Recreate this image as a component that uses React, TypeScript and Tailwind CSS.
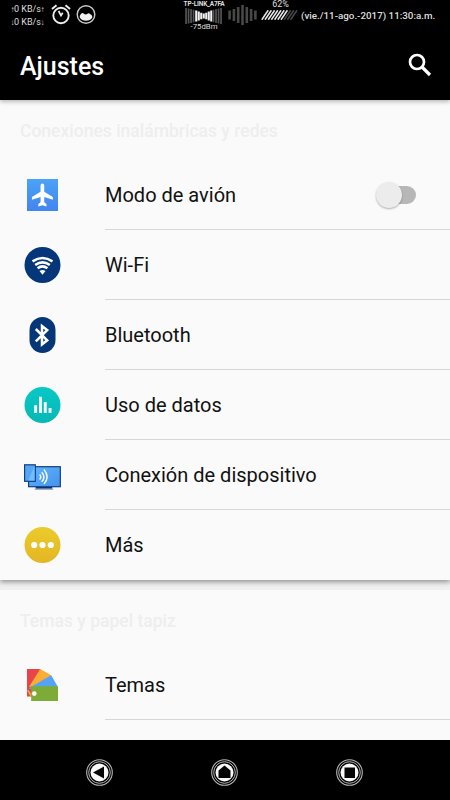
import type { ReactNode } from 'react';

type RowProps = {
    icon: ReactNode;
    label: string;
    action?: ReactNode;
    showDivider?: boolean;
};

const WIFI_BARS = [
    { x: 0.2, h: 16, on: false },
    { x: 2.7, h: 15, on: false },
    { x: 5.2, h: 14, on: false },
    { x: 7.7, h: 12.5, on: false },
    { x: 10.2, h: 11, on: true },
    { x: 12.7, h: 9, on: true },
    { x: 15.2, h: 6.5, on: true },
    { x: 17.7, h: 5, on: true },
    { x: 20.2, h: 6.5, on: true },
    { x: 22.7, h: 9, on: true },
    { x: 25.2, h: 11, on: true },
    { x: 27.7, h: 12.5, on: false },
    { x: 30.2, h: 14, on: false },
    { x: 32.7, h: 15, on: false },
    { x: 35.2, h: 16, on: false },
];

const CELL_BARS = [9, 12, 16, 20, 16, 12, 9];

const ArrowMark = ({ children }: { children: ReactNode }) => (
    <span className="inline-flex w-[3px] justify-center font-['Liberation_Sans',sans-serif] text-[8px]">
        {children}
    </span>
);

const AlarmIcon = () => (
    <svg width="20" height="21" viewBox="0 0 20 21" fill="none">
        <circle cx="10" cy="11.5" r="7.7" stroke="#ededed" strokeWidth="1.9" />
        <path d="M1 5 5.5 1.3M19 5l-4.5-3.7" stroke="#ededed" strokeWidth="2" />
        <path d="M7.6 7 10 11.5l1.7-2.7" stroke="#ededed" strokeWidth="1.7" />
    </svg>
);

const LevelIcon = () => (
    <svg width="20" height="21" viewBox="0 0 20 21" fill="none">
        <circle cx="10" cy="10.5" r="8.8" stroke="#c9c9c9" strokeWidth="1.4" />
        <path
            d="M3.8 13.500q-.6-2 1-3.200Q6.500 8 8.200 10q1.800 1 3.300-.3 1.500-1.200 2.700.5 2.400.6 2 3.500-2 3-6.200 3T3.800 13.500Z"
            fill="#f2f2f2"
        />
    </svg>
);

const StatusBar = () => (
    <div className="flex h-[30px] items-start text-[#dedede]">
        <div className="ml-[11px] flex w-[34px] flex-col pt-[3px] text-[9px] leading-[13px] whitespace-nowrap">
            <p>
                <ArrowMark>↑</ArrowMark>0 KB/s<ArrowMark>↑</ArrowMark>
            </p>
            <p>
                <ArrowMark>↓</ArrowMark>0 KB/s<ArrowMark>↓</ArrowMark>
            </p>
        </div>
        <div className="ml-[6px] flex gap-[5px] pt-[4px]">
            <AlarmIcon />
            <LevelIcon />
        </div>
        <div className="ml-[87px] flex w-[42px] flex-col items-center whitespace-nowrap">
            <p className="h-[8px] text-[6.5px] leading-[8px] font-bold tracking-[-0.2px]">
                TP-LINK_A7FA
            </p>
            <svg width="38" height="16" viewBox="0 0 38 16">
                {WIFI_BARS.map((bar) => (
                    <rect
                        key={bar.x}
                        x={bar.x}
                        y={8 - bar.h / 2}
                        width={bar.on ? 2.1 : 1.7}
                        height={bar.h}
                        fill={bar.on ? '#f2f2f2' : '#545454'}
                    />
                ))}
            </svg>
            <p className="-mt-px text-[7.8px] leading-[8px]">-75dBm</p>
        </div>
        <svg className="mt-[5px] ml-[3px]" width="30" height="20" viewBox="0 0 30 20">
            {CELL_BARS.map((h, i) => (
                <rect
                    key={i}
                    x={0.3 + i * 4.3}
                    y={10 - h / 2}
                    width="2.6"
                    height={h}
                    fill="#484848"
                />
            ))}
        </svg>
        <div className="ml-[2px] flex w-[38px] flex-col items-center">
            <p className="h-[10px] pl-[3px] text-[9px] leading-[8px]">62%</p>
            <svg width="37" height="10" viewBox="0 0 37 10">
                {Array.from({ length: 10 }, (_, i) => (
                    <path
                        key={i}
                        d={`M${0.8 + i * 3.2} 9.7 L${7.2 + i * 3.2} 0.3`}
                        stroke={i < 7 ? '#e8e8e8' : '#4a4a4a'}
                        strokeWidth="1.6"
                    />
                ))}
            </svg>
        </div>
        <p className="ml-[3px] pt-[9px] text-[9.8px] leading-[13px] font-medium whitespace-nowrap">
            (vie./11-ago.-2017) 11:30:a.m.
        </p>
    </div>
);

const AirplaneIcon = () => (
    <svg width="31" height="32" viewBox="0 0 32 32" preserveAspectRatio="none">
        <defs>
            <linearGradient id="plane" x2="0" y2="1">
                <stop stopColor="#4ba3f7" />
                <stop offset="1" stopColor="#4284f0" />
            </linearGradient>
        </defs>
        <path fill="url(#plane)" d="M0 0h32v32H0z" />
        <path
            d="M14 6.3a1.9 1.9 0 0 1 3.8 0v6.500l8.900 5.200v2.700l-8.900-2.800v5.300l2.300 1.900v2.300l-4.200-1.100-4.200 1.100v-2.300l2.300-1.900v-5.300l-8.900 2.800V18l8.900-5.200Z"
            fill="#fff"
        />
    </svg>
);

const WifiIcon = () => (
    <svg width="37" height="36" viewBox="0 0 36 36" fill="none">
        <circle cx="18" cy="18" r="18" fill="#06367a" />
        <g stroke="#fff" strokeWidth="2.6">
            <path d="M8 14.3Q18 7.7 28 14.3" />
            <path d="M10.700 18Q18 12.700 25.300 18" />
            <path d="M13.1 21.3Q18 17.5 22.9 21.3" />
        </g>
        <path d="M15 24q3-2.2 6 0L18 27.7Z" fill="#fff" />
    </svg>
);

const BluetoothIcon = () => (
    <svg width="27" height="36" viewBox="0 0 26 36" fill="none">
        <rect width="26" height="36" rx="13" fill="#053778" />
        <path
            d="m6.3 12 11.4 11.3-5.2 4.2V9l5.2 4.1L6.3 24.4"
            stroke="#fff"
            strokeWidth="2.5"
        />
    </svg>
);

const DataIcon = () => (
    <svg width="37" height="36" viewBox="0 0 36 36">
        <defs>
            <linearGradient id="data" x2="0" y2="1">
                <stop stopColor="#07c9c6" />
                <stop offset="1" stopColor="#07b8b4" />
            </linearGradient>
        </defs>
        <circle cx="18" cy="18" r="18" fill="url(#data)" />
        <path
            d="M9.7 18.3h2.9V26H9.7zM14.5 9.7h2.9V26h-2.9zM19.3 15.1h2.9V26h-2.9zM24.1 21.1H27V26h-2.9z"
            fill="#f7ffff"
        />
    </svg>
);

const CastIcon = () => (
    <svg className="mt-[4px]" width="37" height="26" viewBox="0 0 38 26" preserveAspectRatio="none">
        <defs>
            <linearGradient id="screen" x2="1" y2="1">
                <stop stopColor="#63b5fb" />
                <stop offset="1" stopColor="#4392ee" />
            </linearGradient>
        </defs>
        <rect x="4.7" y="2.7" width="32.6" height="20" fill="url(#screen)" stroke="#103e83" strokeWidth="1.2" />
        <path d="M12 23h17v1.7H12z" fill="#0b3474" />
        <path d="M11 24.7h19v1H11z" fill="#7491b8" />
        <rect x=".6" y=".8" width="11" height="16.5" fill="#55a6f5" stroke="#103e83" strokeWidth="1.2" />
        <path d="M10.8 1.5v15H4.5Z" fill="#70bdff" />
        <g fill="none" stroke="#f5fbff" strokeWidth="1.5">
            <path d="M16 10.5q2.4 2.3 0 5" />
            <path d="M18.2 8.2q4.6 4.8 0 9.6" />
            <path d="M20.5 5.5q6.4 7.3 0 14.5" />
        </g>
    </svg>
);

const MoreIcon = () => (
    <svg width="37" height="36" viewBox="0 0 36 36">
        <defs>
            <linearGradient id="more" x2="0" y2="1">
                <stop stopColor="#ebcb2b" />
                <stop offset="1" stopColor="#e4b624" />
            </linearGradient>
        </defs>
        <circle cx="18" cy="18" r="18" fill="url(#more)" />
        <g fill="#fff">
            <circle cx="9.7" cy="18" r="3.1" />
            <circle cx="18" cy="18" r="3.1" />
            <circle cx="26.3" cy="18" r="3.1" />
        </g>
    </svg>
);

const ThemesIcon = () => (
    <svg width="31" height="32" viewBox="0 0 32 32" preserveAspectRatio="none">
        <path d="M0 0h14v10L5 27.5H0Z" fill="#e9444a" />
        <path d="M13.5 0 25 6.3 15 16 2 18Z" fill="#fbac36" />
        <path d="m25 6.3 6.5 11L14 22 1.3 19.4Z" fill="#54a3f5" />
        <path d="m0 21.5 1.5-.5L5 26l-1.500 1Z" fill="#fbac36" />
        <path d="M4.3 17.2H32V32H4.3Z" fill="#7dab37" />
        <circle cx="7.5" cy="24.6" r="2.4" fill="#fff" />
    </svg>
);

const SectionTitle = ({ children }: { children: ReactNode }) => (
    <h2 className="flex h-[60px] items-center px-5 pt-[2px] text-[17.5px] font-medium text-[#eeeeee]">
        {children}
    </h2>
);

const SettingsRow = ({ icon, label, action, showDivider = true }: RowProps) => (
    <div className="flex h-[70px]">
        <div className="flex w-[85px] shrink-0 items-center justify-center">{icon}</div>
        <div
            className={`ml-[20px] flex flex-1 items-center justify-between pr-[34px] ${
                showDivider ? 'border-b border-[#d6d6d6]' : ''
            }`}
        >
            <p className="text-[20px] text-[#111111]">{label}</p>
            {action}
        </div>
    </div>
);

const Toggle = () => (
    <div className="relative flex h-[18px] w-[34px] rounded-full bg-[#b7b7b7]">
        <div className="absolute -top-1 -left-[6.5px] h-[26px] w-[26px] rounded-full bg-[#ececec] shadow-[0_1px_2px_rgba(0,0,0,0.3)]" />
    </div>
);

const NavButton = ({ children }: { children: ReactNode }) => (
    <svg width="27" height="27" viewBox="0 0 27 27" fill="none">
        <circle cx="13.5" cy="13.5" r="12.8" stroke="#b5b5b5" strokeWidth="1.1" />
        <circle cx="13.5" cy="13.5" r="10.8" stroke="#b5b5b5" />
        <circle cx="13.5" cy="13.5" r="9" fill="#f8f8f8" />
        <g fill="#050505">{children}</g>
    </svg>
);

const NavBar = () => (
    <nav className="flex h-[60px] items-center justify-between bg-black pt-[4px] pr-[87px] pl-[86px]">
        <NavButton>
            <path d="M18 7.5v12L7 13.5Z" />
        </NavButton>
        <NavButton>
            <path d="m13.5 6.5 6 5v7.5h-12v-7.500Z" />
        </NavButton>
        <NavButton>
            <rect x="8.5" y="8.5" width="10.5" height="10.5" />
        </NavButton>
    </nav>
);

export default function App() {
    return (
        <div className="flex h-[800px] w-[450px] flex-col overflow-hidden bg-[#f0f0f0] font-['Roboto',sans-serif]">
            <header className="z-10 h-[100px] shrink-0 bg-black shadow-[0_2px_4px_rgba(0,0,0,0.25)]">
                <StatusBar />
                <div className="flex h-[70px] items-center justify-between pr-[18px] pl-5">
                    <h1 className="pt-[3px] text-[25px] font-medium text-white">Ajustes</h1>
                    <svg width="24" height="24" viewBox="0 0 24 24" fill="none" stroke="#fff">
                        <circle cx="9" cy="9" r="7" strokeWidth="2.7" />
                        <path d="m14 14 8 8" strokeWidth="3.2" />
                    </svg>
                </div>
            </header>
            <main className="flex h-[640px] shrink-0 flex-col gap-[10px] overflow-hidden">
                <section className="h-[480px] shrink-0 bg-[#fafafa] shadow-[0_2px_5px_rgba(0,0,0,0.4)]">
                    <SectionTitle>Conexiones inalámbricas y redes</SectionTitle>
                    <SettingsRow icon={<AirplaneIcon />} label="Modo de avión" action={<Toggle />} />
                    <SettingsRow icon={<WifiIcon />} label="Wi-Fi" />
                    <SettingsRow icon={<BluetoothIcon />} label="Bluetooth" />
                    <SettingsRow icon={<DataIcon />} label="Uso de datos" />
                    <SettingsRow icon={<CastIcon />} label="Conexión de dispositivo" />
                    <SettingsRow icon={<MoreIcon />} label="Más" showDivider={false} />
                </section>
                <section className="h-[150px] shrink-0 bg-[#fafafa]">
                    <SectionTitle>Temas y papel tapiz</SectionTitle>
                    <SettingsRow icon={<ThemesIcon />} label="Temas" />
                </section>
            </main>
            <NavBar />
        </div>
    );
}
